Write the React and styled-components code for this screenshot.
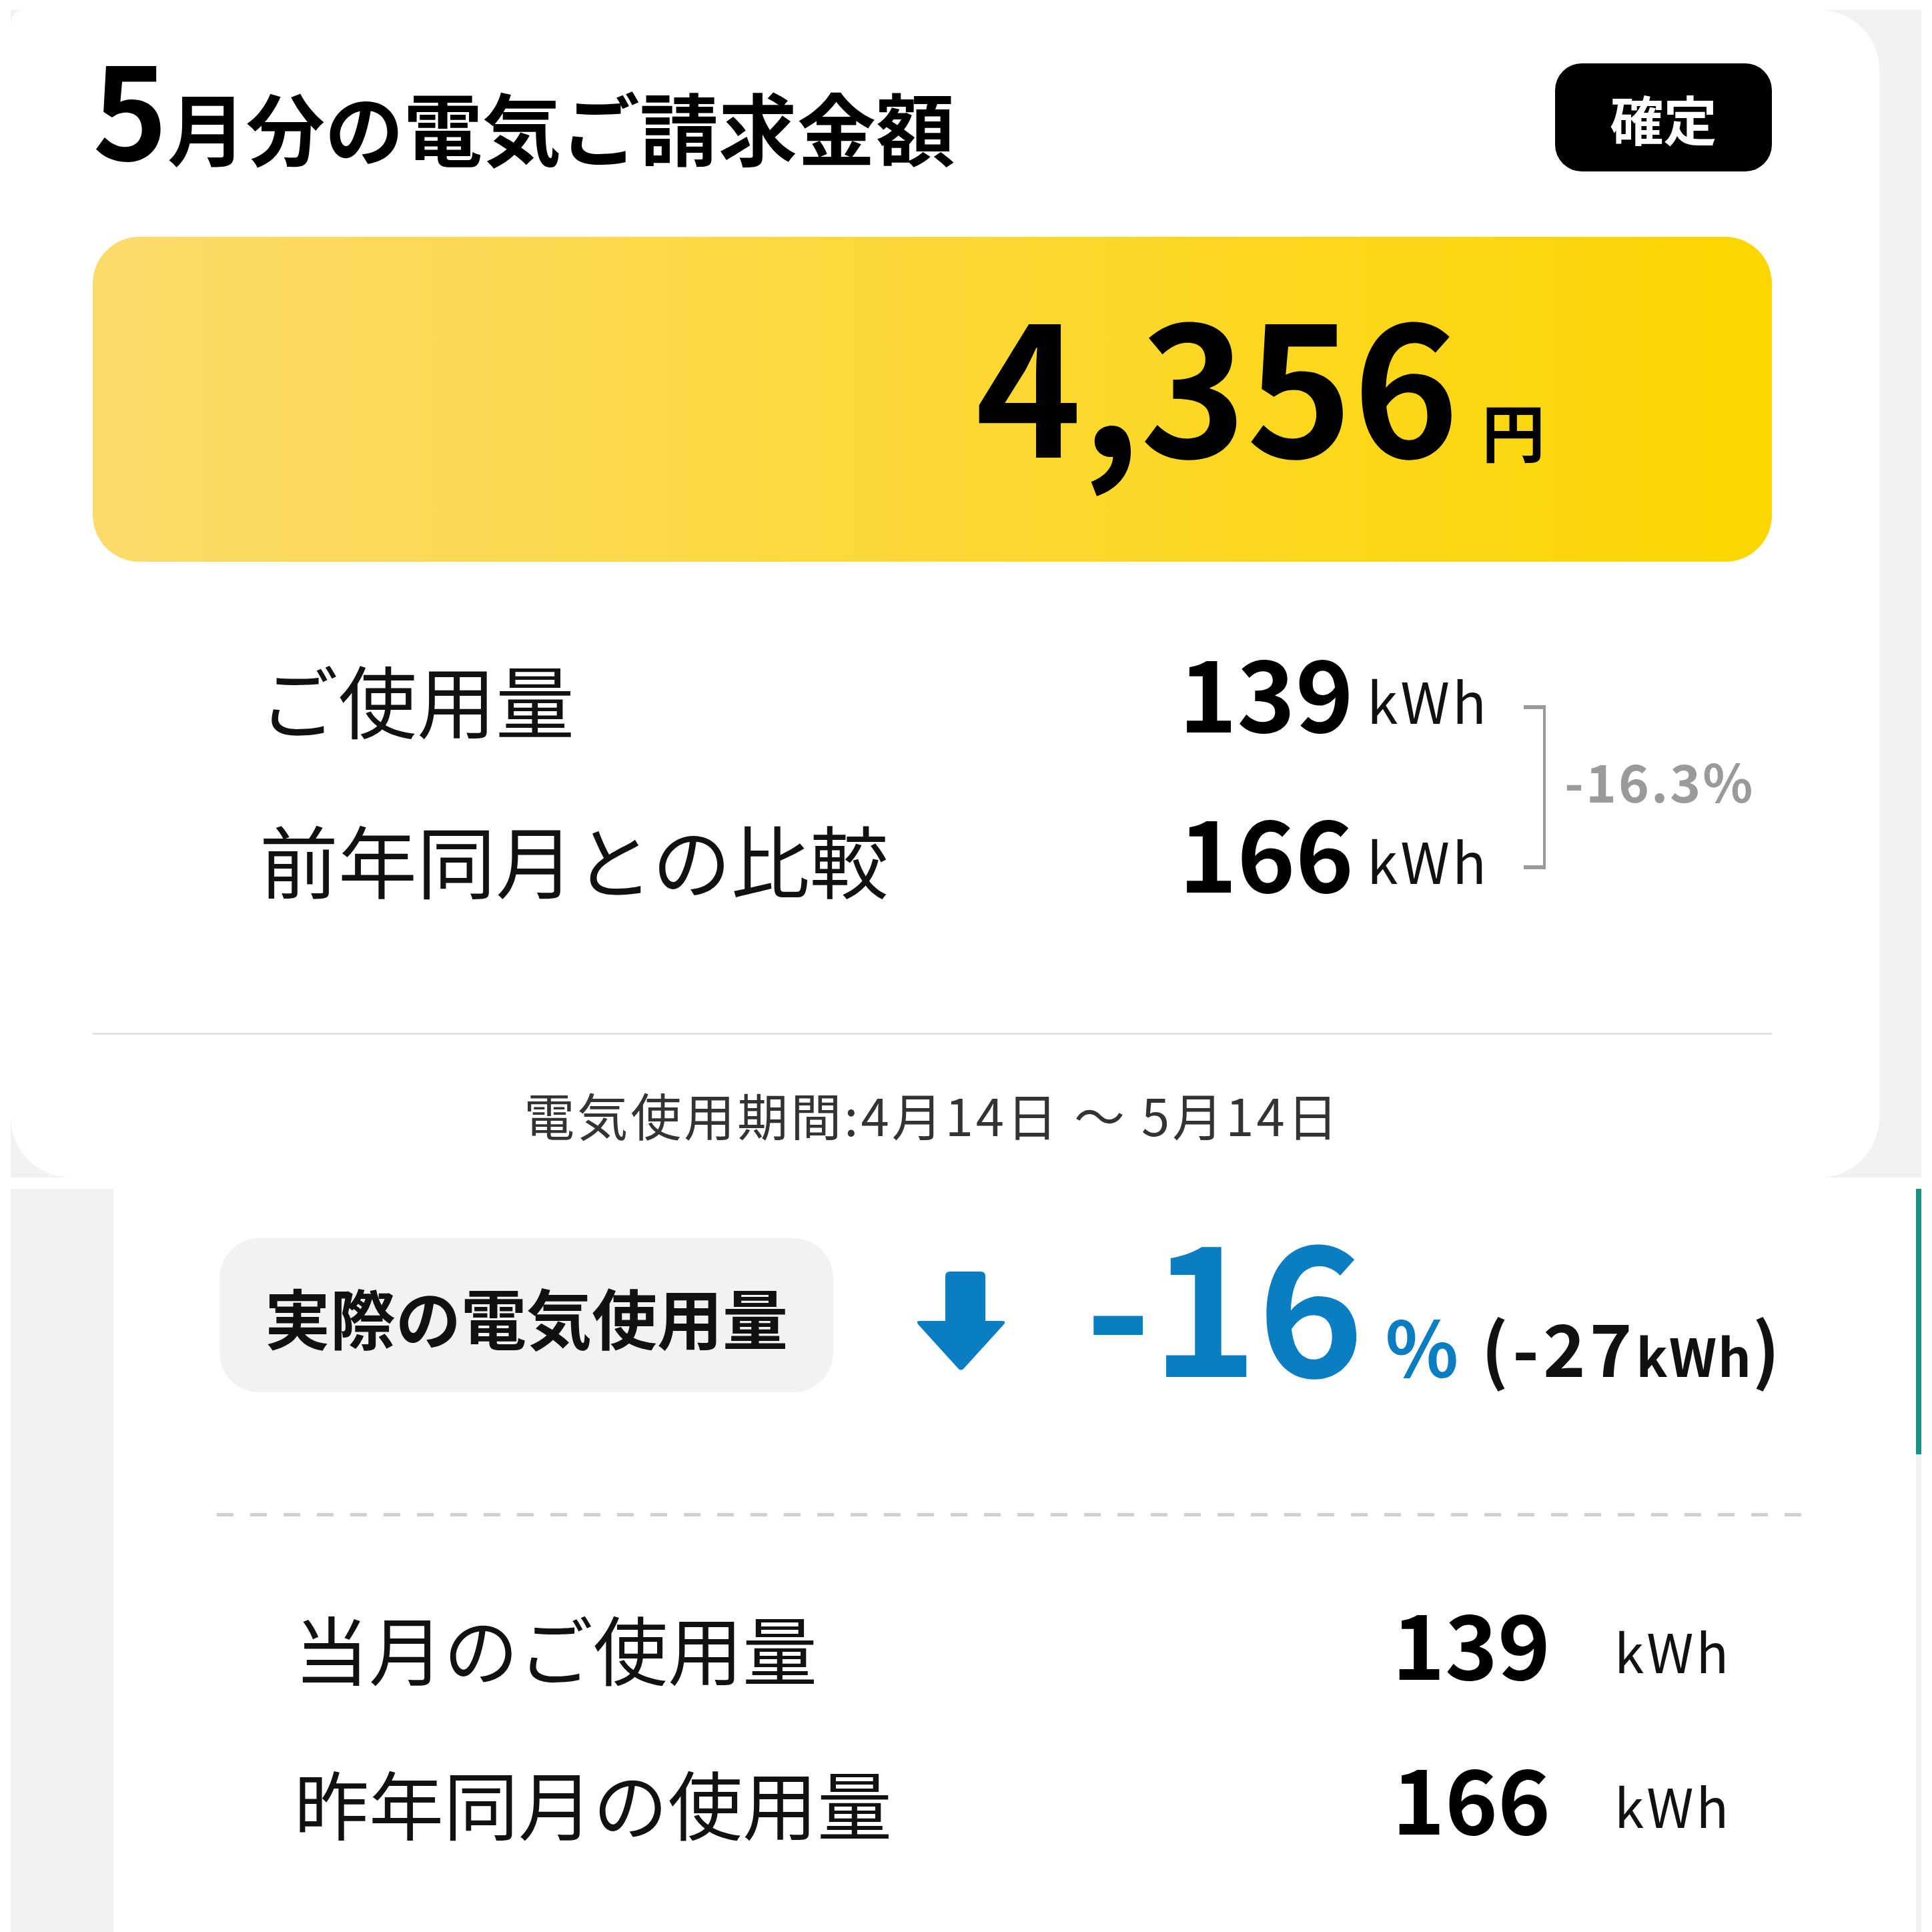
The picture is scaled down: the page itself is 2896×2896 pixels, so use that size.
import React from "react";
import styled, { createGlobalStyle } from "styled-components";

const Global = createGlobalStyle`
  html, body { margin: 0; padding: 0; background: #fff; }
  body { font-family: "Noto Sans CJK JP", "Noto Sans", sans-serif; }
`;

const Page = styled.div`
  width: 2896px;
  height: 2896px;
  overflow: hidden;
  background: #fff;
  box-sizing: border-box;
  padding: 15px 16px 0 16px;
  display: flex;
  flex-direction: column;
  gap: 17px;
  font-family: "Noto Sans CJK JP", "Noto Sans", sans-serif;
  color: #111;
`;

/* ---------- upper screenshot ---------- */
const ShotTop = styled.section`
  height: 1750px;
  flex: none;
  display: flex;
  background: #f2f2f2;
`;

const BillCard = styled.div`
  width: 2801px;
  flex: none;
  background: #fff;
  border-radius: 20px 90px 90px 90px;
  box-sizing: border-box;
  padding: 48px 161px 0 123px;
  display: flex;
  flex-direction: column;
`;

const Header = styled.div`
  display: flex;
  justify-content: space-between;
  align-items: flex-start;
`;

const Title = styled.h1`
  margin: 0;
  font-size: 118px;
  line-height: 1;
  font-weight: 700;
  color: #000;
  white-space: nowrap;
`;

const TitleNum = styled.span`
  font-size: 190px;
`;

const Badge = styled.span`
  margin-top: 32px;
  width: 325px;
  height: 162px;
  display: flex;
  align-items: center;
  justify-content: center;
  background: #000;
  color: #fff;
  border-radius: 40px;
  font-size: 80px;
  font-weight: 700;
  line-height: 1;
`;

const AmountBox = styled.div`
  margin-top: 98px;
  height: 487px;
  box-sizing: border-box;
  border-radius: 70px;
  background: linear-gradient(90deg, #fbdb6c 0%, #fdd600 100%);
  display: flex;
  justify-content: flex-end;
  align-items: flex-start;
  padding: 79px 340px 0 0;
`;

const AmountText = styled.div`
  font-size: 270px;
  line-height: 1;
  font-weight: 700;
  color: #000;
  white-space: nowrap;
`;

const Yen = styled.span`
  font-size: 95px;
  margin-left: 34px;
`;

const Usage = styled.div`
  margin-top: 118px;
  display: flex;
  align-items: flex-start;
  padding-left: 250px;
`;

const UsageRows = styled.div`
  display: flex;
  flex-direction: column;
  gap: 92px;
`;

const UsageRow = styled.div`
  display: flex;
  align-items: baseline;
  line-height: 1;
`;

const UsageLabel = styled.span`
  width: 1378px;
  font-size: 118px;
  font-weight: 400;
  color: #111;
  white-space: nowrap;
`;

const UsageValue = styled.span`
  font-size: ${(p) => p.$size}px;
  font-weight: 700;
  color: #000;
  white-space: nowrap;
`;

const Unit = styled.span`
  font-size: ${(p) => p.$size}px;
  font-weight: 400;
  margin-left: ${(p) => p.$gap}px;
  vertical-align: ${(p) => p.$raise}px;
  letter-spacing: 4px;
  color: #111;
`;

const Bracket = styled.div`
  flex: none;
  margin-top: 97px;
  margin-left: 52px;
  width: 33px;
  height: 246px;
  box-sizing: border-box;
  border-top: 6px solid #9a9a9a;
  border-bottom: 6px solid #9a9a9a;
  border-right: 4px solid #9a9a9a;
`;

const Diff = styled.span`
  margin-top: 170px;
  margin-left: 28px;
  font-size: 78px;
  font-weight: 700;
  line-height: 1;
  color: #9a9a9a;
  letter-spacing: 3px;
  white-space: nowrap;
`;

const Divider = styled.hr`
  margin: 200px 0 0 0;
  border: none;
  height: 3px;
  background: #e2e2e2;
`;

const Period = styled.p`
  margin: 81px 0 0 0;
  text-align: center;
  font-size: 76px;
  line-height: 1;
  color: #333;
  letter-spacing: 4px;
  white-space: nowrap;
`;

/* ---------- lower screenshot ---------- */
const ShotBottom = styled.section`
  flex: 1;
  display: flex;
  background: #f2f2f2;
`;

const SideGutter = styled.div`
  width: 154px;
  flex: none;
`;

const UsageCard = styled.div`
  flex: 1;
  background: #fff;
  box-sizing: border-box;
  padding: 25px 161px 0 155px;
  display: flex;
  flex-direction: column;
`;

const ScrollTrack = styled.div`
  width: 8px;
  flex: none;
  display: flex;
  flex-direction: column;
`;

const ScrollThumb = styled.div`
  height: 398px;
  background: #1a9282;
`;

const Summary = styled.div`
  display: flex;
  align-items: flex-start;
`;

const Pill = styled.div`
  flex: none;
  margin-top: 49px;
  margin-left: 4px;
  width: 920px;
  height: 231px;
  border-radius: 60px;
  background: #f2f2f2;
  display: flex;
  align-items: center;
  justify-content: center;
  font-size: 98px;
  font-weight: 700;
  line-height: 1;
  color: #111;
  white-space: nowrap;
`;

const ArrowIcon = styled.svg`
  flex: none;
  margin-top: 99px;
  margin-left: 123px;
  width: 137px;
  height: 148px;
`;

const Change = styled.div`
  margin-top: 5px;
  margin-left: 117px;
  font-size: 270px;
  line-height: 1;
  font-weight: 700;
  color: #0b7ec3;
  white-space: nowrap;
`;

const Percent = styled.span`
  font-size: 114px;
  margin-left: 32px;
`;

const Delta = styled.span`
  font-size: 108px;
  color: #111;
  margin-left: 34px;
  letter-spacing: 6px;
`;

const DeltaUnit = styled.span`
  font-size: 78px;
  letter-spacing: 2px;
`;

const Dashed = styled.div`
  margin-top: 181px;
  height: 5px;
  background-image: repeating-linear-gradient(
    90deg,
    #cfcfcf 0,
    #cfcfcf 25px,
    transparent 25px,
    transparent 50px
  );
`;

const ReadingRows = styled.div`
  margin-top: 120px;
  padding: 0 116px 0 116px;
  display: flex;
  flex-direction: column;
  gap: 98px;
`;

const ReadingRow = styled.div`
  display: flex;
  align-items: baseline;
  justify-content: space-between;
  line-height: 1;
`;

const ReadingLabel = styled.span`
  font-size: 112px;
  font-weight: 400;
  color: #111;
  white-space: nowrap;
`;

function DownArrow() {
  return (
    <ArrowIcon viewBox="0 0 137 148" aria-hidden="true">
      <path
        d="M45 7 Q45 0 52 0 H98 Q105 0 105 7 V74 H130 Q137 74 132.5 79.5 L73 145 Q68.5 150 64 145 L4.5 79.5 Q0 74 7 74 H45 Z"
        fill="#0b7ec3"
      />
    </ArrowIcon>
  );
}

export default function App() {
  return (
    <>
      <Global />
      <Page>
        <ShotTop>
          <BillCard>
            <Header>
              <Title>
                <TitleNum>5</TitleNum>月分の電気ご請求金額
              </Title>
              <Badge>確定</Badge>
            </Header>
            <AmountBox>
              <AmountText>
                4,356<Yen>円</Yen>
              </AmountText>
            </AmountBox>
            <Usage>
              <UsageRows>
                <UsageRow>
                  <UsageLabel>ご使用量</UsageLabel>
                  <UsageValue $size={148}>
                    139<Unit $size={84} $gap={20} $raise={13}>kWh</Unit>
                  </UsageValue>
                </UsageRow>
                <UsageRow>
                  <UsageLabel>前年同月との比較</UsageLabel>
                  <UsageValue $size={148}>
                    166<Unit $size={84} $gap={20} $raise={13}>kWh</Unit>
                  </UsageValue>
                </UsageRow>
              </UsageRows>
              <Bracket />
              <Diff>-16.3%</Diff>
            </Usage>
            <Divider />
            <Period>電気使用期間:4月14日 〜 5月14日</Period>
          </BillCard>
        </ShotTop>

        <ShotBottom>
          <SideGutter />
          <UsageCard>
            <Summary>
              <Pill>実際の電気使用量</Pill>
              <DownArrow />
              <Change>
                -16<Percent>%</Percent>
                <Delta>
                  (-27<DeltaUnit>kWh</DeltaUnit>)
                </Delta>
              </Change>
            </Summary>
            <Dashed />
            <ReadingRows>
              <ReadingRow>
                <ReadingLabel>当月のご使用量</ReadingLabel>
                <UsageValue $size={134}>
                  139<Unit $size={80} $gap={96} $raise={10}>kWh</Unit>
                </UsageValue>
              </ReadingRow>
              <ReadingRow>
                <ReadingLabel>昨年同月の使用量</ReadingLabel>
                <UsageValue $size={134}>
                  166<Unit $size={80} $gap={96} $raise={10}>kWh</Unit>
                </UsageValue>
              </ReadingRow>
            </ReadingRows>
          </UsageCard>
          <ScrollTrack>
            <ScrollThumb />
          </ScrollTrack>
        </ShotBottom>
      </Page>
    </>
  );
}
